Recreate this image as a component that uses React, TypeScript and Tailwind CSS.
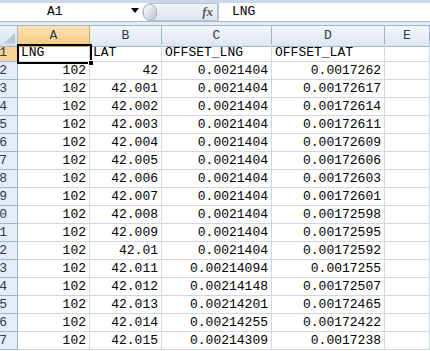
import React from "react";

const rows: string[][] = [
  ["102", "42", "0.0021404", "0.0017262"],
  ["102", "42.001", "0.0021404", "0.00172617"],
  ["102", "42.002", "0.0021404", "0.00172614"],
  ["102", "42.003", "0.0021404", "0.00172611"],
  ["102", "42.004", "0.0021404", "0.00172609"],
  ["102", "42.005", "0.0021404", "0.00172606"],
  ["102", "42.006", "0.0021404", "0.00172603"],
  ["102", "42.007", "0.0021404", "0.00172601"],
  ["102", "42.008", "0.0021404", "0.00172598"],
  ["102", "42.009", "0.0021404", "0.00172595"],
  ["102", "42.01", "0.0021404", "0.00172592"],
  ["102", "42.011", "0.00214094", "0.0017255"],
  ["102", "42.012", "0.00214148", "0.00172507"],
  ["102", "42.013", "0.00214201", "0.00172465"],
  ["102", "42.014", "0.00214255", "0.00172422"],
  ["102", "42.015", "0.00214309", "0.0017238"],
];

const cols = "grid grid-cols-[18px_72px_72px_110px_113px_1fr]";
const cell = "h-[18px] border-r border-b border-[#d0d7e5] flex items-center px-[3px] whitespace-nowrap overflow-hidden";

function RowHead({ n, active }: { n: number; active?: boolean }) {
  return (
    <div
      className={`h-[18px] border-r border-b border-[#9eb6ce] flex items-center text-[#2b3a4c] ${
        active ? "bg-[#f7d596]" : "bg-[#e4ecf7]"
      }`}
    >
      <div className="flex w-[7px] justify-end whitespace-nowrap">{n}</div>
    </div>
  );
}

export default function App() {
  return (
    <div
      className="w-[430px] h-[351px] overflow-hidden bg-white text-[13px] text-black relative"
      style={{ fontFamily: '"Liberation Mono", "Noto Sans CJK SC", monospace' }}
    >
      {/* formula bar */}
      <div className="h-[3px] bg-[#c9d8ea]" />
      <div className="flex h-[19px] bg-white border-b border-[#a7b9d0]">
        <div className="w-[142px] flex items-center relative">
          <span className="ml-[47px]">A1</span>
          <span className="absolute left-[131px] top-[5px] w-0 h-0 border-l-[4px] border-r-[4px] border-t-[5px] border-l-transparent border-r-transparent border-t-black" />
        </div>
        <div className="w-[76px] flex items-center bg-gradient-to-b from-[#f2f5f9] to-[#dde4ee] rounded-l-full border border-[#b7c4d6] relative">
          <div className="w-[14px] h-[17px] rounded-full bg-gradient-to-br from-[#ffffff] to-[#b9c2cd] border border-[#aab6c6]" />
          <span
            className="ml-auto mr-[4px] italic font-bold text-[#5a5a5a] text-[13px]"
            style={{ fontFamily: '"Liberation Serif", serif' }}
          >
            fx
          </span>
        </div>
        <div className="flex-1 flex items-center border-l border-[#b7c4d6] pl-[13px]">LNG</div>
      </div>
      <div className="h-[4px] bg-[#e6ecf4] border-b border-[#9eb6ce]" />

      {/* column headers */}
      <div className={`${cols} h-[18px] text-[#2b3a4c]`}>
        <div className="relative bg-gradient-to-b from-[#eef3fa] to-[#d8e2ef] border-r border-b border-[#9eb6ce]">
          <span className="absolute right-[2px] bottom-[2px] w-0 h-0 border-l-[11px] border-t-[11px] border-l-transparent border-t-transparent border-b-0 border-r-0 [border-bottom:0] bg-transparent" />
          <span className="absolute right-[2px] bottom-[2px] w-[11px] h-[11px] bg-[#b6c7dc] [clip-path:polygon(100%_0,100%_100%,0_100%)]" />
        </div>
        <div className="flex items-center justify-center bg-gradient-to-b from-[#fbe3b6] to-[#f4c97e] border-r border-b border-[#c9a664]">A</div>
        {["B", "C", "D", "E"].map((c) => (
          <div
            key={c}
            className="flex items-center justify-center bg-gradient-to-b from-[#f4f7fb] to-[#dfe6f0] border-r border-b border-[#9eb6ce]"
          >
            {c}
          </div>
        ))}
      </div>

      {/* row 1 */}
      <div className={cols}>
        <RowHead n={1} active />
        <div className={cell}>LNG</div>
        <div className={cell}>LAT</div>
        <div className={cell}>OFFSET_LNG</div>
        <div className={cell}>OFFSET_LAT</div>
        <div className={cell} />
      </div>

      {rows.map((r, i) => (
        <div key={i} className={cols}>
          <RowHead n={i + 2} />
          {r.map((v, j) => (
            <div key={j} className={`${cell} justify-end`}>
              {v}
            </div>
          ))}
          <div className={cell} />
        </div>
      ))}

      {/* selection around A1 */}
      <div className="absolute left-[17px] top-[44px] w-[75px] h-[20px] border-2 border-black pointer-events-none" />
      <div className="absolute left-[88px] top-[60px] w-[6px] h-[6px] bg-black border border-white pointer-events-none" />
    </div>
  );
}
